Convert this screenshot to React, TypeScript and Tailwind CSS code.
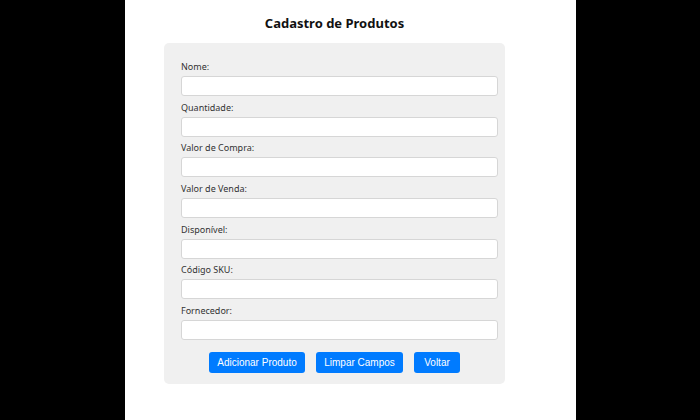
import React from "react"

const fields = [
  "Nome:",
  "Quantidade:",
  "Valor de Compra:",
  "Valor de Venda:",
  "Disponível:",
  "Código SKU:",
  "Fornecedor:",
]

export default function App() {
  return (
    <div className="flex h-[420px] w-[700px] bg-black">
      <div className="ml-[125px] h-full w-[451px] bg-white font-['Noto_Sans',sans-serif]">
        <div className="ml-[39px] w-[341px]">
          <h1 className="pt-[13px] text-center text-[13px] font-bold leading-[20px] text-[#111]">
            Cadastro de Produtos
          </h1>
          <div className="mt-[10px] rounded-[5px] bg-[#f0f0f0] pb-[11px] pl-[17px] pr-[7px] pt-[17px]">
            {fields.map((f) => (
              <div key={f} className="mb-[4.7px]">
                <label className="block text-[9px] leading-[14px] text-[#333]">{f}</label>
                <input
                  type="text"
                  className="mt-[2px] block h-[20px] w-[317px] rounded-[3px] border border-[#d6d6d6] bg-white outline-none"
                />
              </div>
            ))}
            <div className="mt-[12px] flex justify-center gap-[11px] pr-[10px] font-['Liberation_Sans',Arial,sans-serif]">
              <button className="h-[21px] w-[96px] rounded-[3px] bg-[#007bff] text-[10px] text-white">
                Adicionar Produto
              </button>
              <button className="h-[21px] w-[87px] rounded-[3px] bg-[#007bff] text-[10px] text-white">
                Limpar Campos
              </button>
              <button className="h-[21px] w-[46px] rounded-[3px] bg-[#007bff] text-[10px] text-white">
                Voltar
              </button>
            </div>
          </div>
        </div>
      </div>
    </div>
  )
}
